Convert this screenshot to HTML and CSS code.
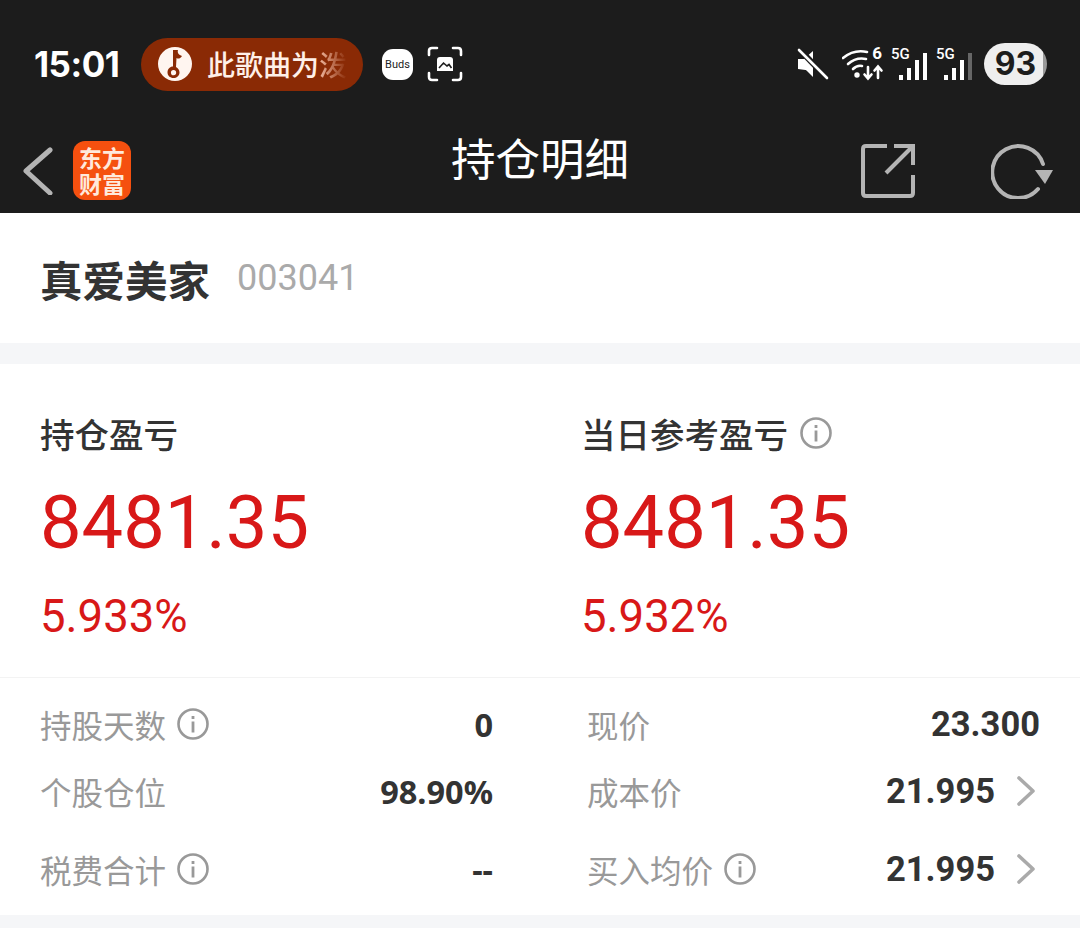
FILE: index.html
```html
<!DOCTYPE html>
<html lang="zh-CN">
<head>
  <meta charset="UTF-8">
  <meta name="viewport" content="width=device-width, initial-scale=1.0">
  <title>持仓明细</title>
  <link rel="stylesheet" href="styles.css">
</head>
<body>

  <header class="top">
    <div class="status">
      <span class="time">15:01</span>
      <div class="music-pill">
        <svg class="music-icon" viewBox="0 0 34 34">
          <circle cx="17" cy="17" r="17" fill="#fff5f0"/>
          <path d="M15 3 L20 3 C19 6 21 8 24 9 C22 12 20 12 18.5 11 L18 20 C20 21 21.5 23 21.5 25.5 C21.5 29 18.5 31 15.5 31 C12 31 9.5 28.5 9.5 25.5 C9.5 22 12 19.5 15 19.5 Z M15.5 23 A2.6 2.6 0 1 0 15.6 28.2 A2.6 2.6 0 1 0 15.5 23 Z" fill="#8a2a05"/>
        </svg>
        <div class="music-text">此歌曲为<span class="music-fade">泼</span></div>
      </div>
      <div class="buds">Buds</div>
      <svg class="shot-icon" viewBox="0 0 36 36" fill="none" stroke="#fff" stroke-width="2.6" stroke-linecap="round">
        <path d="M2 9 V5 Q2 2 5 2 H10 M26 2 H31 Q34 2 34 5 V9 M34 27 V31 Q34 34 31 34 H26 M10 34 H5 Q2 34 2 31 V27"/>
        <path d="M10 25 V14 Q10 11 13 11 H23 Q26 11 26 14 V25 Z" fill="#fff" stroke="none"/>
        <path d="M12 22 L16.5 17 L20 20 L22 18.5 L24.5 22" stroke="#1c1c1c" stroke-width="1.6" stroke-linecap="butt"/>
      </svg>

      <div class="status-right">
        <svg class="mute-icon" viewBox="0 0 32 32">
          <path d="M1 11 H7 L16 3 V23 L1 21 Z" fill="#fff"/>
          <path d="M2 1 L30 30" stroke="#1c1c1c" stroke-width="6"/>
          <path d="M2 2 L30 30" stroke="#fff" stroke-width="2.6" stroke-linecap="round"/>
          <path d="M8 21 L16 29 V21 Z" fill="#fff"/>
        </svg>
        <div class="wifi">
          <svg viewBox="0 0 42 34" fill="none" stroke="#fff" stroke-width="2.6" stroke-linecap="round">
            <path d="M1 11 Q12 2 25 5"/>
            <path d="M6 17 Q14 10 24 12"/>
            <path d="M11 22 Q15 18 20 19"/>
            <circle cx="15" cy="28" r="1.4" fill="#fff"/>
            <path d="M26 20 V31 M22.5 27.5 L26 31.5 L29.5 27.5"/>
            <path d="M36 31 V20 M32.5 23.5 L36 19.5 L39.5 23.5"/>
          </svg>
          <span class="wifi-six">6</span>
        </div>
        <div class="signal">
          <span class="signal-label">5G</span>
          <div class="bars">
            <i class="bar bar-1"></i><i class="bar bar-2"></i><i class="bar bar-3"></i><i class="bar bar-4"></i>
          </div>
        </div>
        <div class="signal">
          <span class="signal-label">5G</span>
          <div class="bars">
            <i class="bar bar-1"></i><i class="bar bar-2"></i><i class="bar bar-3"></i><i class="bar bar-4 bar-off"></i>
          </div>
        </div>
        <div class="battery">93</div>
      </div>
    </div>

    <nav class="toolbar">
      <svg class="back-icon" viewBox="0 0 30 48" fill="none" stroke="#b4b4b4" stroke-width="5" stroke-linecap="round" stroke-linejoin="round">
        <path d="M27 3 L3 24 L27 46"/>
      </svg>
      <div class="logo">东方<br>财富</div>
      <h1 class="title">持仓明细</h1>
      <svg class="share-icon" viewBox="0 0 54 54" fill="none" stroke="#b4b4b4" stroke-width="4">
        <path d="M26 2 H5 Q2 2 2 5 V49 Q2 52 5 52 H49 Q52 52 52 49 V31"/>
        <path d="M33 2 H52 V21"/>
        <path d="M51 3 L25 29"/>
      </svg>
      <svg class="refresh-icon" viewBox="0 0 62 56">
        <path d="M47 46 A26 26 0 1 1 52 21" fill="none" stroke="#b4b4b4" stroke-width="4" stroke-linecap="round"/>
        <path d="M44 27 H62 L54 41 Z" fill="#b4b4b4"/>
      </svg>
    </nav>
  </header>

  <section class="stock">
    <span class="stock-name">真爱美家</span>
    <span class="stock-code">003041</span>
  </section>

  <section class="summary">
    <div class="summary-col">
      <div class="summary-label">持仓盈亏</div>
      <div class="summary-value">8481.35</div>
      <div class="summary-rate">5.933%</div>
    </div>
    <div class="summary-col">
      <div class="summary-label">当日参考盈亏
        <svg class="info-icon" viewBox="0 0 32 32"><use href="#info"/></svg>
      </div>
      <div class="summary-value">8481.35</div>
      <div class="summary-rate">5.932%</div>
    </div>
  </section>

  <section class="details">
    <div class="cell">
      <span class="cell-label">持股天数 <svg class="info-icon" viewBox="0 0 32 32"><use href="#info"/></svg></span>
      <span class="cell-value">0</span>
    </div>
    <div class="cell cell-right">
      <span class="cell-label">现价</span>
      <span class="cell-value">23.300</span>
    </div>
    <div class="cell">
      <span class="cell-label">个股仓位</span>
      <span class="cell-value">98.90%</span>
    </div>
    <div class="cell cell-right">
      <span class="cell-label">成本价</span>
      <span class="cell-value">21.995</span>
      <svg class="arrow-icon" viewBox="0 0 24 30"><use href="#arrow"/></svg>
    </div>
    <div class="cell">
      <span class="cell-label">税费合计 <svg class="info-icon" viewBox="0 0 32 32"><use href="#info"/></svg></span>
      <span class="cell-value">--</span>
    </div>
    <div class="cell cell-right">
      <span class="cell-label">买入均价 <svg class="info-icon" viewBox="0 0 32 32"><use href="#info"/></svg></span>
      <span class="cell-value">21.995</span>
      <svg class="arrow-icon" viewBox="0 0 24 30"><use href="#arrow"/></svg>
    </div>
  </section>

  <div class="gap-small"></div>

  <!-- shared icons -->
  <svg class="icon-defs" width="0" height="0">
    <defs>
      <g id="info">
        <circle cx="16" cy="16" r="14.5" fill="none" stroke="#999" stroke-width="2.6"/>
        <rect x="14.6" y="13.5" width="2.8" height="11" fill="#999"/>
        <rect x="14.6" y="8" width="2.8" height="3" fill="#999"/>
      </g>
      <path id="arrow" d="M3 2 L17 15 L3 28" fill="none" stroke="#aaa" stroke-width="3.6" stroke-linecap="round" stroke-linejoin="round"/>
    </defs>
  </svg>

</body>
</html>
```
FILE: styles.css
```css
*{
margin: 0;
padding: 0;
box-sizing: border-box;
}

body{
  background: #fff;
  font-family: "Noto Sans CJK SC", "Noto Sans", sans-serif;
  color: #333;
}

.top{
  height: 213px;
  background: #1c1c1c;
  color: #fff;
}

/* status bar */
.status{
  height: 128px;
  display: flex;
  align-items: center;
  padding: 0 33px 0 34px;
}

.time{
  font-family: Inter, sans-serif;
  font-size: 35px;
  font-weight: 700;
  width: 107px;
  letter-spacing: -0.5px;
}

.music-pill{
  width: 222px;
  height: 53px;
  border-radius: 27px;
  background: #8a2a05;
  display: flex;
  align-items: center;
  padding-left: 17px;
  margin-right: 19px;
}

.music-icon{
  width: 34px;
  height: 34px;
  margin-right: 15px;
}

.music-text{
  font-size: 28px;
  font-weight: 500;
  line-height: 53px;
  white-space: nowrap;
  color: #fff0e8;
}

.music-fade{
  background: linear-gradient(to right, #f0b8a0, #8a2a05);
  -webkit-background-clip: text;
  background-clip: text;
  color: transparent;
}

.buds{
  width: 31px;
  height: 31px;
  border-radius: 11px;
  background: #fff;
  color: #222;
  font-family: Roboto, sans-serif;
  font-size: 11px;
  line-height: 31px;
  text-align: center;
  margin-right: 14px;
}

.shot-icon{
  width: 36px;
  height: 36px;
}

.status-right{
  margin-left: auto;
  display: flex;
  align-items: center;
}

.mute-icon{
  width: 32px;
  height: 32px;
  margin-right: 13px;
}

.wifi{
  width: 42px;
  height: 34px;
  position: relative;
  margin-right: 7px;
}

.wifi svg{
  width: 42px;
  height: 34px;
  display: block;
}

.wifi-six{
  position: absolute;
  right: 2px;
  top: -4px;
  font-family: Roboto, sans-serif;
  font-size: 17px;
  font-weight: 700;
}

.signal{
  width: 36px;
  height: 32px;
  position: relative;
  margin-right: 9px;
}

.signal-label{
  position: absolute;
  left: 0;
  top: -3px;
  font-family: Roboto, sans-serif;
  font-size: 15px;
  font-weight: 500;
}

.bars{
  position: absolute;
  right: 0;
  bottom: 0;
  display: flex;
  align-items: flex-end;
  gap: 4px;
  height: 28px;
}

.bar{
  display: block;
  width: 4px;
  background: #fff;
}

.bar-1{ height: 5px; }
.bar-2{ height: 12px; }
.bar-3{ height: 20px; }
.bar-4{ height: 27px; }
.bar-off{ background: #666; }

.battery{
  width: 63px;
  height: 42px;
  border-radius: 21px;
  margin-left: 3px;
  background: linear-gradient(to right, #eee 93%, #999 93%);
  color: #1c1c1c;
  font-family: Inter, sans-serif;
  font-size: 32px;
  font-weight: 700;
  line-height: 42px;
  text-align: center;
}

/* title row */
.toolbar{
  height: 85px;
  display: flex;
  align-items: center;
  position: relative;
  padding: 0 27px 0 23px;
}

.back-icon{
  width: 30px;
  height: 48px;
  margin-right: 20px;
}

.logo{
  width: 58px;
  height: 59px;
  border-radius: 12px;
  background: #f5500f;
  color: #ffe9dc;
  font-size: 23px;
  font-weight: 700;
  line-height: 26px;
  padding-top: 3px;
  text-align: center;
}

.title{
  position: absolute;
  left: 0;
  right: 0;
  top: 0;
  line-height: 58px;
  text-align: center;
  font-size: 44.5px;
  font-weight: 400;
  color: #fff;
}

.share-icon{
  width: 54px;
  height: 54px;
  margin-left: auto;
  margin-right: 76px;
}

.refresh-icon{
  width: 62px;
  height: 56px;
}

/* name row */
.stock{
  height: 130px;
  padding: 0 40px;
  display: flex;
  align-items: center;
  border-bottom: 0;
}

.stock-name{
  font-size: 42.5px;
  font-weight: 700;
  color: #333;
  margin-right: 27px;
}

.stock-code{
  font-family: Roboto, sans-serif;
  font-size: 36px;
  color: #aaa;
}

/* profit block */
.summary{
  display: grid;
  grid-template-columns: 541px 1fr;
  height: 335px;
  padding: 47px 40px 0;
  border-top: 21px solid #f5f6f8;
  border-bottom: 1px solid #f3f3f3;
}

.summary-label{
  display: flex;
  align-items: center;
  gap: 12px;
  font-size: 34.5px;
  font-weight: 500;
  line-height: 44px;
  color: #333;
}

.summary-value{
  font-family: Roboto, sans-serif;
  font-size: 74px;
  line-height: 90px;
  margin-top: 23px;
  color: #d81818;
}

.summary-rate{
  font-family: Roboto, sans-serif;
  font-size: 45.5px;
  line-height: 54px;
  margin-top: 22px;
  color: #d81818;
}

.info-icon{
  width: 32px;
  height: 32px;
  flex-shrink: 0;
}

/* detail grid */
.details{
  display: grid;
  grid-template-columns: 1fr 1fr;
  grid-template-rows: 60px 74px 82px;
  column-gap: 94px;
  padding: 16px 40px 0;
  height: 237px;
}

.cell{
  display: flex;
  align-items: center;
}

.cell-label{
  display: flex;
  align-items: center;
  gap: 11px;
  font-size: 31.5px;
  color: #999;
  margin-right: auto;
}

.cell-value{
  font-family: "Noto Sans", sans-serif;
  font-size: 32.5px;
  font-weight: 700;
  color: #333;
}

.cell-right .cell-value{
  font-family: Roboto, sans-serif;
  font-size: 34.5px;
}

.arrow-icon{
  width: 24px;
  height: 30px;
  margin-left: 21px;
}

.gap-small{
  height: 13px;
  background: #f5f6f8;
}

.icon-defs{
  position: absolute;
}
```
